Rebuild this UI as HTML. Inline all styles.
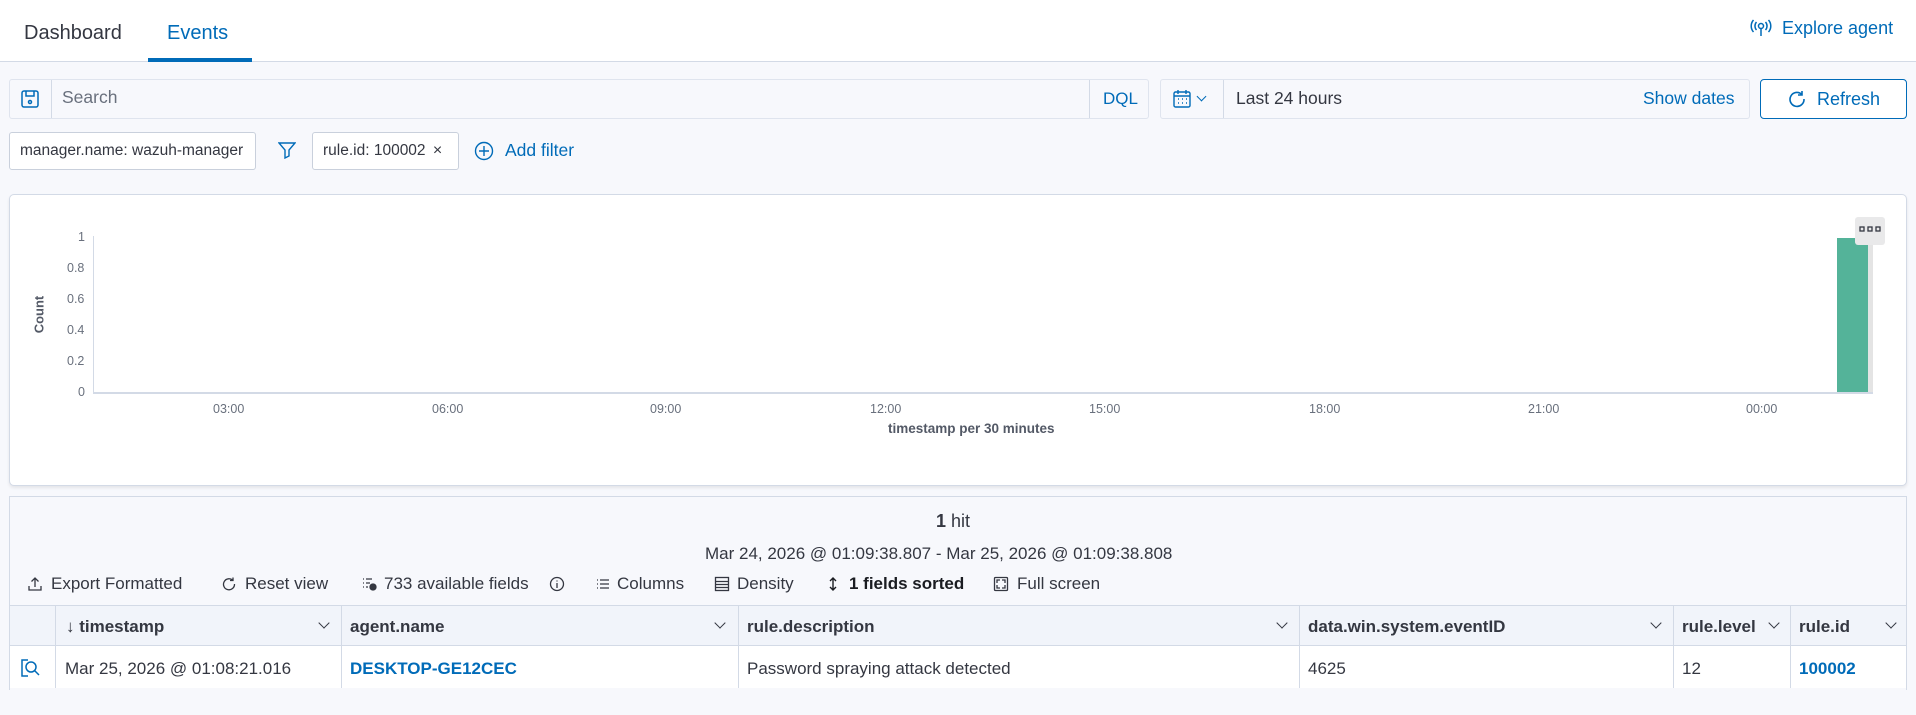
<!DOCTYPE html>
<html><head><meta charset="utf-8"><style>
*{box-sizing:border-box;margin:0;padding:0}
body{width:1916px;height:715px;overflow:hidden;background:#f7f8fc;font-family:"Liberation Sans",sans-serif;color:#343741;position:relative}
.a{position:absolute}
.blue{color:#006bb8}
.hdr{left:0;top:0;width:1916px;height:62px;background:#fff;border-bottom:1px solid #d3dae6}
.box{background:#f7f8fc;border:1px solid #dfe4ee;border-radius:3px}
.t{white-space:nowrap;line-height:1}
.pill{background:#fff;border:1px solid #c9d0dc;border-radius:3px;font-size:15.5px;line-height:36px;padding:0 10px;white-space:nowrap}
.tick{font-size:12.5px;color:#69707d}
.th{font-size:17px;font-weight:bold;top:618px}
.td{font-size:17px;top:660px}
.chev{width:8px;height:8px;border-right:1.5px solid #343741;border-bottom:1.5px solid #343741;transform:rotate(45deg)}
.vl{width:1px;background:#d3dae6}
.ic{position:absolute;top:576px}
</style></head><body>
<div class="a hdr"></div>
<div class="a t" style="left:24px;top:23px;font-size:20px">Dashboard</div>
<div class="a t blue" style="left:167px;top:23px;font-size:20px">Events</div>
<div class="a" style="left:148px;top:58px;width:104px;height:4px;background:#006bb8"></div>
<svg class="a" style="left:1750px;top:19px" width="22" height="18" viewBox="0 0 22 18" fill="none" stroke="#006bb8" stroke-width="1.5"><circle cx="11" cy="7" r="2.5"/><path d="M11 9.5V17M6.5 3a6 6 0 0 0 0 8M15.5 3a6 6 0 0 1 0 8M3.5 1a9 9 0 0 0 0 12M18.5 1a9 9 0 0 1 0 12"/></svg>
<div class="a t blue" style="left:1782px;top:19px;font-size:18px">Explore agent</div>

<div class="a box" style="left:9px;top:79px;width:1140px;height:40px"></div>
<div class="a vl" style="left:51px;top:80px;height:38px"></div>
<svg class="a" style="left:20px;top:89px" width="20" height="20" viewBox="0 0 20 20" fill="none" stroke="#006bb8" stroke-width="1.5"><rect x="2" y="2" width="16" height="16" rx="2"/><path d="M6 2v5h8V2"/><circle cx="10" cy="13" r="1.5"/></svg>
<div class="a t" style="left:62px;top:89px;font-size:17.5px;color:#69707d">Search</div>
<div class="a vl" style="left:1089px;top:80px;height:38px"></div>
<div class="a t blue" style="left:1103px;top:90px;font-size:17px">DQL</div>
<div class="a box" style="left:1160px;top:79px;width:590px;height:40px"></div>
<div class="a vl" style="left:1223px;top:80px;height:38px"></div>
<svg class="a" style="left:1172px;top:89px" width="20" height="20" viewBox="0 0 20 20" fill="none" stroke="#006bb8" stroke-width="1.4"><rect x="2" y="3" width="16" height="15" rx="1.5"/><path d="M2 7h16M6 1v4M14 1v4M6 10h1M10 10h1M14 10h1M6 14h1M10 14h1M14 14h1"/></svg>
<div class="a chev" style="left:1198px;top:93px;border-color:#006bb8;width:7px;height:7px"></div>
<div class="a t" style="left:1236px;top:90px;font-size:17.5px">Last 24 hours</div>
<div class="a t blue" style="left:1643px;top:90px;font-size:17.5px">Show dates</div>
<div class="a" style="left:1760px;top:79px;width:147px;height:40px;border:1.5px solid #006bb8;border-radius:4px;background:#fff"></div>
<svg class="a" style="left:1788px;top:90px" width="18" height="18" viewBox="0 0 18 18" fill="none" stroke="#006bb8" stroke-width="1.6"><path d="M14 4.5A7 7 0 1 0 16 9M14 1v4h-4"/></svg>
<div class="a t blue" style="left:1817px;top:90px;font-size:18px">Refresh</div>

<div class="a pill" style="left:9px;top:132px;height:38px;width:247px">manager.name: wazuh-manager</div>
<svg class="a" style="left:278px;top:141px" width="18" height="18" viewBox="0 0 18 18" fill="none" stroke="#006bb8" stroke-width="1.4"><path d="M1 2h16l-6 7v6l-4 2V9z"/></svg>
<div class="a pill" style="left:312px;top:132px;height:38px;width:147px">rule.id: 100002 <span style="font-size:16px;margin-left:3px">×</span></div>
<svg class="a" style="left:474px;top:141px" width="20" height="20" viewBox="0 0 20 20" fill="none" stroke="#006bb8" stroke-width="1.4"><circle cx="10" cy="10" r="8.5"/><path d="M10 5v10M5 10h10"/></svg>
<div class="a t blue" style="left:505px;top:142px;font-size:17.5px">Add filter</div>

<div class="a" style="left:9px;top:194px;width:1898px;height:292px;background:#fff;border:1px solid #d3dae6;border-radius:5px;box-shadow:0 2px 3px rgba(0,0,0,.08)"></div>
<div class="a" style="left:93px;top:236px;width:1px;height:157px;background:#d3dae6"></div>
<div class="a" style="left:93px;top:392px;width:1780px;height:2px;background:#d3dae6"></div>
<div class="a tick t" style="left:78px;top:231px">1</div>
<div class="a tick t" style="left:67px;top:262px">0.8</div>
<div class="a tick t" style="left:67px;top:293px">0.6</div>
<div class="a tick t" style="left:67px;top:324px">0.4</div>
<div class="a tick t" style="left:67px;top:355px">0.2</div>
<div class="a tick t" style="left:78px;top:386px">0</div>
<div class="a t" style="left:20px;top:308px;font-size:13px;font-weight:bold;color:#535966;transform:rotate(-90deg)">Count</div>
<div class="a tick t" style="left:213px;top:403px">03:00</div>
<div class="a tick t" style="left:432px;top:403px">06:00</div>
<div class="a tick t" style="left:650px;top:403px">09:00</div>
<div class="a tick t" style="left:870px;top:403px">12:00</div>
<div class="a tick t" style="left:1089px;top:403px">15:00</div>
<div class="a tick t" style="left:1309px;top:403px">18:00</div>
<div class="a tick t" style="left:1528px;top:403px">21:00</div>
<div class="a tick t" style="left:1746px;top:403px">00:00</div>
<div class="a t" style="left:888px;top:422px;font-size:13.5px;font-weight:bold;color:#535966">timestamp per 30 minutes</div>
<div class="a" style="left:1868px;top:238px;width:5px;height:154px;background:#e4e4e4"></div>
<div class="a" style="left:1837px;top:238px;width:31px;height:154px;background:#54b399"></div>
<div class="a" style="left:1855px;top:217px;width:30px;height:28px;background:#e9e9ea;border-radius:3px"></div>
<svg class="a" style="left:1859px;top:226px" width="22" height="8" viewBox="0 0 22 8" fill="none" stroke="#343741" stroke-width="1.3"><rect x="1" y="1" width="4" height="4"/><rect x="9" y="1" width="4" height="4"/><rect x="17" y="1" width="4" height="4"/></svg>

<div class="a" style="left:9px;top:496px;width:1898px;height:194px;border:1px solid #d3dae6;border-bottom:none"></div>
<div class="a t" style="left:936px;top:512px;font-size:18px"><b>1</b> hit</div>
<div class="a t" style="left:705px;top:545px;font-size:17px">Mar 24, 2026 @ 01:09:38.807 - Mar 25, 2026 @ 01:09:38.808</div>

<svg class="ic" style="left:27px" width="16" height="16" viewBox="0 0 16 16" fill="none" stroke="#343741" stroke-width="1.3"><path d="M8 2v9M4.5 5.5L8 2l3.5 3.5M2 10v4h12v-4"/></svg>
<svg class="ic" style="left:221px" width="16" height="16" viewBox="0 0 16 16" fill="none" stroke="#343741" stroke-width="1.3"><path d="M12 4.5A5.5 5.5 0 1 0 13.5 8M12 1.5v3H9"/></svg>
<svg class="ic" style="left:361px" width="16" height="16" viewBox="0 0 16 16" fill="none" stroke="#343741" stroke-width="1.3"><path d="M2 3h1M5 3h6M2 7h1M5 7h4M2 11h1M5 11h2"/><circle cx="12" cy="11" r="3" fill="#343741"/></svg>
<svg class="ic" style="left:549px" width="16" height="16" viewBox="0 0 16 16" fill="none" stroke="#343741" stroke-width="1.3"><circle cx="8" cy="8" r="6.5"/><path d="M8 7v5M8 4.5v1"/></svg>
<svg class="ic" style="left:595px" width="16" height="16" viewBox="0 0 16 16" fill="none" stroke="#343741" stroke-width="1.3"><path d="M2 4h1M5 4h9M2 8h1M5 8h9M2 12h1M5 12h9"/></svg>
<svg class="ic" style="left:714px" width="16" height="16" viewBox="0 0 16 16" fill="none" stroke="#343741" stroke-width="1.3"><rect x="1.5" y="1.5" width="13" height="13"/><path d="M1.5 5.5h13M1.5 8.5h13M1.5 11.5h13"/></svg>
<svg class="ic" style="left:826px" width="14" height="16" viewBox="0 0 14 16" fill="none" stroke="#1a1c21" stroke-width="1.4"><path d="M7 2v12M4 5l3-3 3 3M4 11l3 3 3-3"/></svg>
<svg class="ic" style="left:993px" width="16" height="16" viewBox="0 0 16 16" fill="none" stroke="#343741" stroke-width="1.3"><rect x="1.5" y="1.5" width="13" height="13" rx="1"/><path d="M4 7V4h3M9 4h3v3M12 9v3H9M7 12H4V9"/></svg>
<div class="a t" style="left:51px;top:575px;font-size:17px">Export Formatted</div>
<div class="a t" style="left:245px;top:575px;font-size:17px">Reset view</div>
<div class="a t" style="left:384px;top:575px;font-size:17px">733 available fields</div>
<div class="a t" style="left:617px;top:575px;font-size:17px">Columns</div>
<div class="a t" style="left:737px;top:575px;font-size:17px">Density</div>
<div class="a t" style="left:849px;top:575px;font-size:17px;font-weight:bold;color:#1a1c21">1 fields sorted</div>
<div class="a t" style="left:1017px;top:575px;font-size:17px">Full screen</div>

<div class="a" style="left:10px;top:605px;width:1896px;height:41px;background:#f1f4fa;border-top:1px solid #d3dae6;border-bottom:1px solid #d3dae6"></div>
<div class="a" style="left:10px;top:646px;width:1896px;height:42px;background:#fff"></div>
<div class="a vl" style="left:55px;top:605px;height:83px"></div>
<div class="a vl" style="left:341px;top:605px;height:83px"></div>
<div class="a vl" style="left:738px;top:605px;height:83px"></div>
<div class="a vl" style="left:1299px;top:605px;height:83px"></div>
<div class="a vl" style="left:1673px;top:605px;height:83px"></div>
<div class="a vl" style="left:1790px;top:605px;height:83px"></div>
<div class="a th t" style="left:66px">↓ timestamp</div>
<div class="a th t" style="left:350px">agent.name</div>
<div class="a th t" style="left:747px">rule.description</div>
<div class="a th t" style="left:1308px">data.win.system.eventID</div>
<div class="a th t" style="left:1682px">rule.level</div>
<div class="a th t" style="left:1799px">rule.id</div>
<div class="a chev" style="left:320px;top:619px;border-width:0 1.2px 1.2px 0"></div>
<div class="a chev" style="left:716px;top:619px;border-width:0 1.2px 1.2px 0"></div>
<div class="a chev" style="left:1278px;top:619px;border-width:0 1.2px 1.2px 0"></div>
<div class="a chev" style="left:1652px;top:619px;border-width:0 1.2px 1.2px 0"></div>
<div class="a chev" style="left:1770px;top:619px;border-width:0 1.2px 1.2px 0"></div>
<div class="a chev" style="left:1887px;top:619px;border-width:0 1.2px 1.2px 0"></div>
<svg class="a" style="left:20px;top:658px" width="20" height="20" viewBox="0 0 20 20" fill="none" stroke="#006bb8" stroke-width="1.5"><path d="M8 2H2v16h6"/><circle cx="11" cy="9" r="5"/><path d="M14.5 12.5L19 17"/></svg>
<div class="a td t" style="left:65px">Mar 25, 2026 @ 01:08:21.016</div>
<div class="a td t blue" style="left:350px;font-weight:bold">DESKTOP-GE12CEC</div>
<div class="a td t" style="left:747px">Password spraying attack detected</div>
<div class="a td t" style="left:1308px">4625</div>
<div class="a td t" style="left:1682px">12</div>
<div class="a td t blue" style="left:1799px;font-weight:bold">100002</div>
</body></html>
